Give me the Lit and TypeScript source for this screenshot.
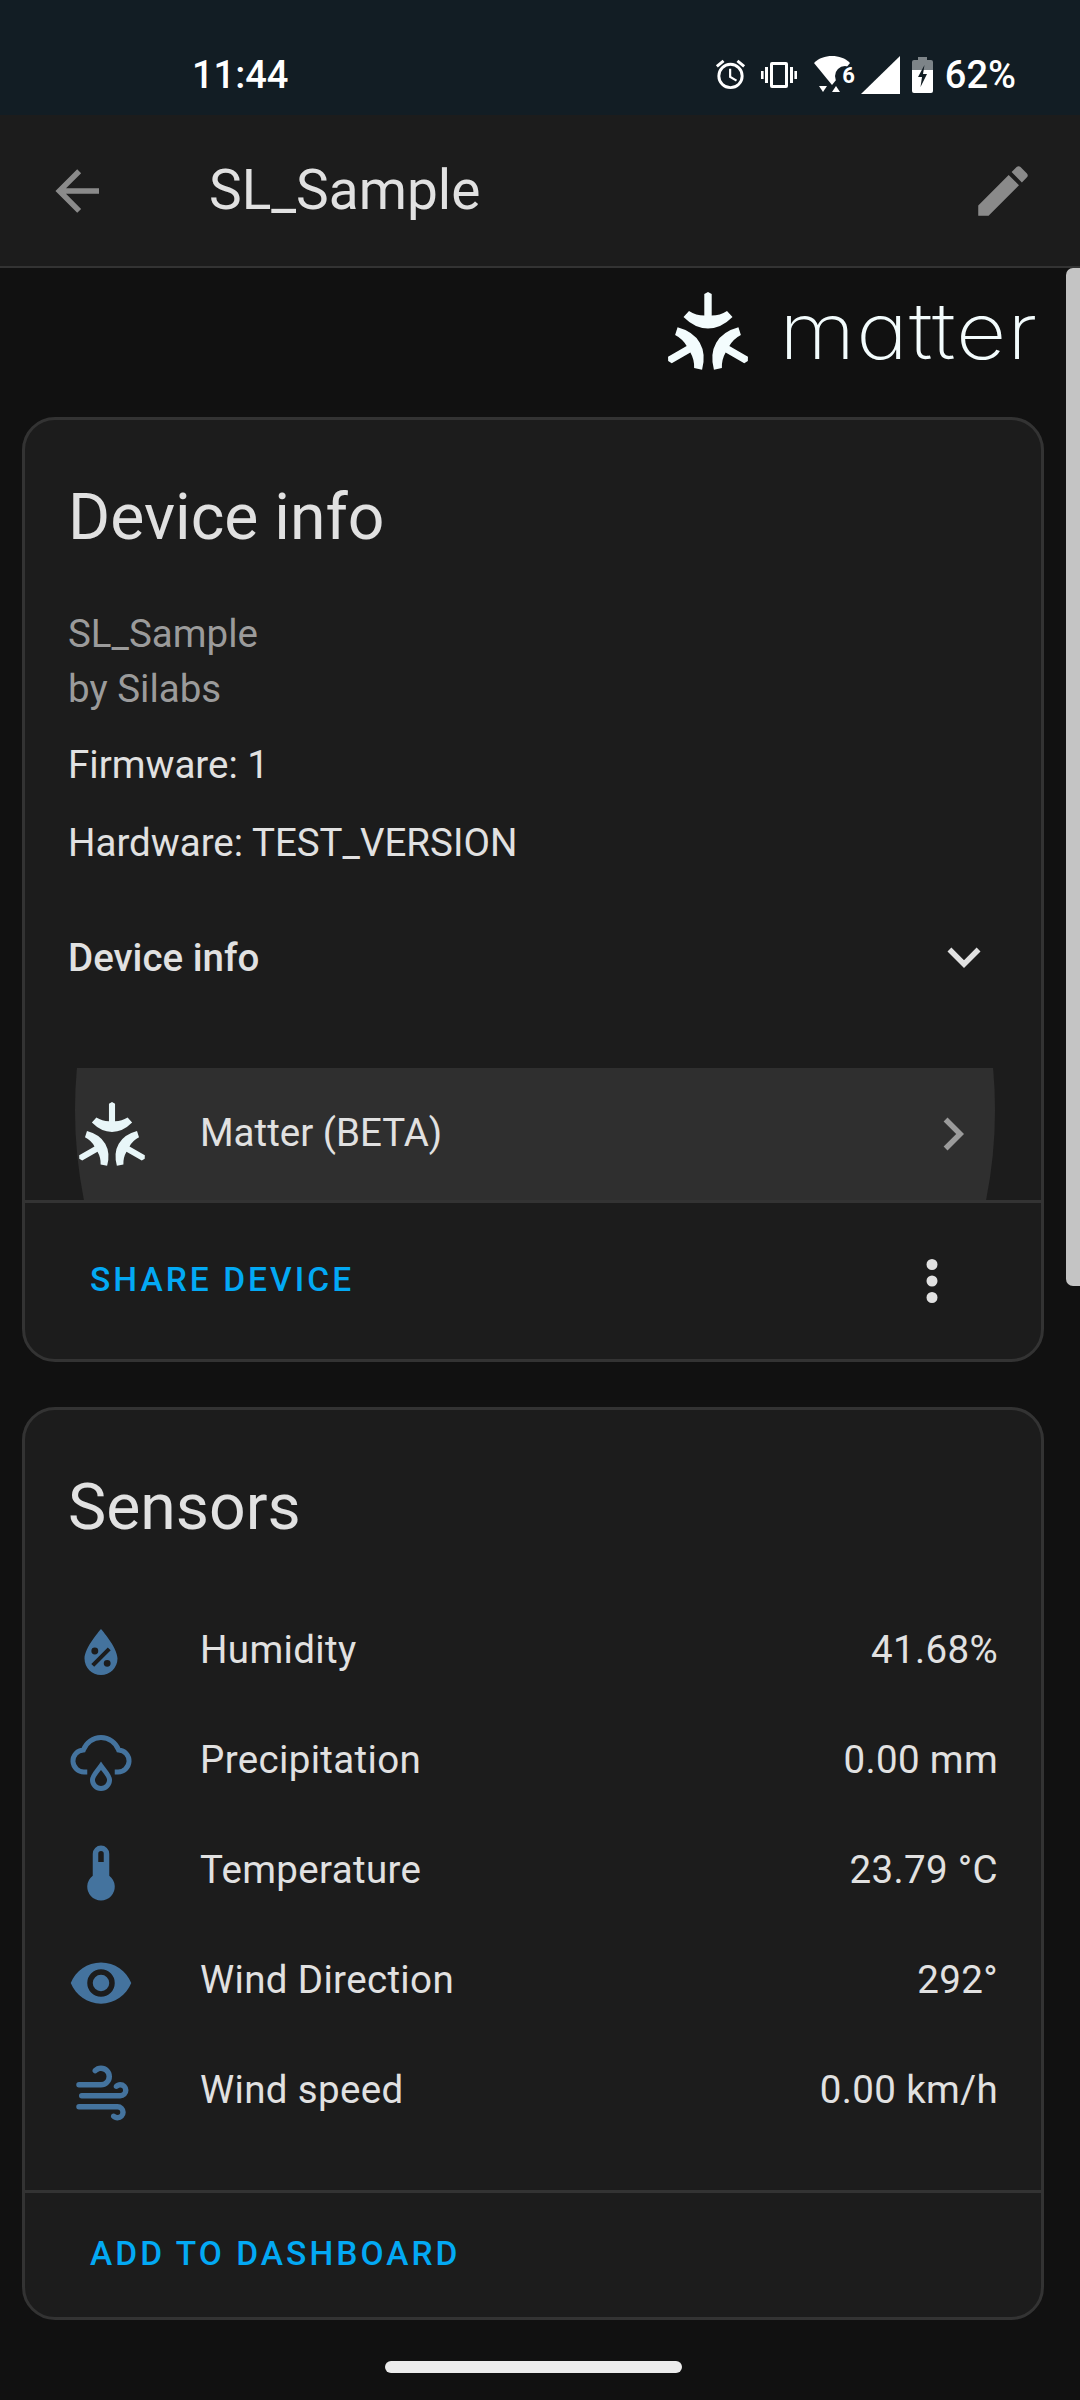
import { LitElement, html, css, svg } from 'lit';
import { customElement } from 'lit/decorators.js';

const mdi = (d: string, cls = '') =>
  html`<svg class="icon ${cls}" viewBox="0 0 24 24"><path d=${d}></path></svg>`;

const ICONS = {
  back: 'M20,11V13H8L13.5,18.5L12.08,19.92L4.16,12L12.08,4.08L13.5,5.5L8,11H20Z',
  pencil:
    'M20.71,7.04C21.1,6.65 21.1,6 20.71,5.63L18.37,3.29C18,2.9 17.35,2.9 16.96,3.29L15.12,5.12L18.87,8.87M3,17.25V21H6.75L17.81,9.93L14.06,6.18L3,17.25Z',
  down: 'M7.41,8.58L12,13.17L16.59,8.58L18,10L12,16L6,10L7.41,8.58Z',
  right: 'M8.59,16.58L13.17,12L8.59,7.41L10,6L16,12L10,18L8.59,16.58Z',
  dots: 'M12,16A2,2 0 0,1 14,18A2,2 0 0,1 12,20A2,2 0 0,1 10,18A2,2 0 0,1 12,16M12,10A2,2 0 0,1 14,12A2,2 0 0,1 12,14A2,2 0 0,1 10,12A2,2 0 0,1 12,10M12,4A2,2 0 0,1 14,6A2,2 0 0,1 12,8A2,2 0 0,1 10,6A2,2 0 0,1 12,4Z',
  humidity:
    'M12,3.25C12,3.25 6,10 6,14C6,17.32 8.69,20 12,20A6,6 0 0,0 18,14C18,10 12,3.25 12,3.25M14.47,9.97L15.53,11.03L9.53,17.03L8.47,15.97M9.75,10A1.25,1.25 0 0,1 11,11.25A1.25,1.25 0 0,1 9.75,12.5A1.25,1.25 0 0,1 8.5,11.25A1.25,1.25 0 0,1 9.75,10M14.25,14.5A1.25,1.25 0 0,1 15.5,15.75A1.25,1.25 0 0,1 14.25,17A1.25,1.25 0 0,1 13,15.75A1.25,1.25 0 0,1 14.25,14.5Z',
  thermometer:
    'M15 13V5A3 3 0 0 0 9 5V13A5 5 0 1 0 15 13M12 4A1 1 0 0 1 13 5V8H11V5A1 1 0 0 1 12 4Z',
  eye: 'M12,9A3,3 0 0,0 9,12A3,3 0 0,0 12,15A3,3 0 0,0 15,12A3,3 0 0,0 12,9M12,17A5,5 0 0,1 7,12A5,5 0 0,1 12,7A5,5 0 0,1 17,12A5,5 0 0,1 12,17M12,4.5C7,4.5 2.73,7.61 1,12C2.73,16.39 7,19.5 12,19.5C17,19.5 21.27,16.39 23,12C21.27,7.61 17,4.5 12,4.5Z',
  wind: 'M4,10A1,1 0 0,1 3,9A1,1 0 0,1 4,8H12A2,2 0 0,0 14,6A2,2 0 0,0 12,4C11.45,4 10.95,4.22 10.59,4.59C10.2,5 9.56,5 9.17,4.59C8.78,4.2 8.78,3.56 9.17,3.17C9.9,2.45 10.9,2 12,2A4,4 0 0,1 16,6A4,4 0 0,1 12,10H4M19,12A1,1 0 0,0 20,11A1,1 0 0,0 19,10C18.72,10 18.47,10.11 18.29,10.29C17.9,10.68 17.27,10.68 16.88,10.29C16.5,9.9 16.5,9.27 16.88,8.88C17.42,8.34 18.17,8 19,8A3,3 0 0,1 22,11A3,3 0 0,1 19,14H5A1,1 0 0,1 4,13A1,1 0 0,1 5,12H19M18,18H4A1,1 0 0,1 3,17A1,1 0 0,1 4,16H18A3,3 0 0,1 21,19A3,3 0 0,1 18,22C17.17,22 16.42,21.66 15.88,21.12C15.5,20.73 15.5,20.1 15.88,19.71C16.27,19.32 16.9,19.32 17.29,19.71C17.47,19.89 17.72,20 18,20A1,1 0 0,0 19,19A1,1 0 0,0 18,18Z',
  alarm:
    'M12,20A7,7 0 0,1 5,13A7,7 0 0,1 12,6A7,7 0 0,1 19,13A7,7 0 0,1 12,20M12,4A9,9 0 0,0 3,13A9,9 0 0,0 12,22A9,9 0 0,0 21,13A9,9 0 0,0 12,4M12.5,8H11V14L15.75,16.85L16.5,15.62L12.5,13.25V8M7.88,3.39L6.6,1.86L2,5.71L3.29,7.24L7.88,3.39M22,5.72L17.4,1.86L16.11,3.39L20.71,7.25L22,5.72Z',
};

const MATTER_ARM =
  'M50,4 L53.7,6 V27.5 Q62,27.5 69,23 L74.5,29 Q63,40.5 50,40.5 Q37,40.5 25.5,29 L31,23 Q38,27.5 46.3,27.5 V6 Z';

const matterMark = (cls: string) => html`<svg class=${cls} viewBox="10 4 80 84">
  ${[0, 120, 240].map(
    a => svg`<path d=${MATTER_ARM} transform="rotate(${a} 50 50)"></path>`,
  )}
</svg>`;

const precipitationIcon = html`<svg class="icon precip" viewBox="0 0 24 24">
  <path d="M7,16.7H6A4,4 0 0,1 5.6,8.7A6.8,6.8 0 0,1 18.4,8.7A4,4 0 0,1 18,16.7H17"></path>
  <path d="M12,14.5C10.6,16.5 8.9,18 8.9,19.6A3.1,3.1 0 0,0 15.1,19.6C15.1,18 13.4,16.5 12,14.5Z"></path>
</svg>`;

const SENSORS = [
  { icon: mdi(ICONS.humidity), name: 'Humidity', value: '41.68%' },
  { icon: precipitationIcon, name: 'Precipitation', value: '0.00 mm' },
  { icon: mdi(ICONS.thermometer), name: 'Temperature', value: '23.79 °C' },
  { icon: mdi(ICONS.eye), name: 'Wind Direction', value: '292°' },
  { icon: mdi(ICONS.wind), name: 'Wind speed', value: '0.00 km/h' },
];

@customElement('app-root')
export class AppRoot extends LitElement {
  static styles = css`
    :host {
      display: block;
      position: relative;
      width: 1080px;
      height: 2400px;
      overflow: hidden;
      background: #111111;
      color: #e1e1e1;
      font-family: Roboto, 'Liberation Sans', sans-serif;
    }

    .icon {
      display: block;
      width: 66px;
      height: 66px;
      flex: none;
      fill: currentColor;
    }

    /* status bar */
    .status {
      box-sizing: border-box;
      height: 115px;
      background: #121d24;
      color: #ffffff;
      display: flex;
      align-items: center;
      padding: 34px 64px 0 192px;
    }
    .time {
      font-size: 38px;
      font-weight: 500;
      flex: 1;
    }
    .status-icons {
      display: flex;
      align-items: center;
    }
    .alarm {
      width: 35px;
      height: 35px;
      margin-right: 13px;
    }
    .vibrate {
      width: 36px;
      height: 26px;
      margin-right: 17px;
      fill: #fff;
    }
    .wifi-wrap {
      position: relative;
      width: 40px;
      height: 38px;
      margin-right: 7px;
    }
    .wifi {
      width: 38px;
      height: 38px;
      display: block;
      fill: #fff;
    }
    .wifi-six {
      position: absolute;
      right: -1px;
      top: 9px;
      font-size: 22px;
      font-weight: 700;
      line-height: 22px;
      color: #fff;
    }
    .signal {
      width: 39px;
      height: 38px;
      margin-right: 12px;
      fill: #fff;
    }
    .battery {
      width: 21px;
      height: 36px;
      margin-right: 12px;
    }
    .pct {
      font-size: 38px;
      font-weight: 500;
    }

    /* app bar */
    .bar {
      box-sizing: border-box;
      height: 153px;
      background: #1c1c1c;
      border-bottom: 2px solid #333333;
      display: flex;
      align-items: center;
      padding: 0 44px;
    }
    .bar .icon {
      color: #8a8a8a;
    }
    .bar-title {
      flex: 1;
      margin: -2px 0 0 99px;
      font-size: 55px;
      color: #e1e1e1;
    }

    /* logo */
    .logo-row {
      box-sizing: border-box;
      height: 149px;
      display: flex;
      align-items: flex-start;
      justify-content: flex-end;
      padding: 24px 42px 0 0;
      gap: 33px;
      color: #f3fcfd;
    }
    .logo-mark {
      width: 80px;
      height: 84px;
      fill: #f3fcfd;
    }
    .logo-text {
      font-family: Inter, sans-serif;
      font-weight: 200;
      font-size: 78px;
      line-height: 84px;
      font-feature-settings: 'cv11' 1;
      letter-spacing: 1px;
      margin: -3px 0 0 26px;
      transform: scaleX(1.12);
      transform-origin: right center;
    }

    /* cards */
    .card {
      box-sizing: border-box;
      margin: 0 36px 0 22px;
      border: 3px solid #333333;
      border-radius: 33px;
      background: #1c1c1c;
      overflow: hidden;
    }
    .card + .card {
      margin-top: 45px;
    }
    .card-title {
      font-size: 64.3px;
      line-height: 72px;
      padding: 61px 43px 0;
      color: #e1e1e1;
    }
    .info {
      padding: 0 44px 0 43px;
      font-size: 38.5px;
    }
    .muted {
      color: #9b9b9b;
    }
    .line {
      display: block;
    }
    .info-a {
      padding-top: 53px;
      line-height: 55px;
    }
    .info-b,
    .info-c {
      margin-top: 21px;
      line-height: 56px;
    }
    .info-c {
      margin-top: 22px;
    }
    .collapse {
      margin-top: 56px;
      height: 60px;
      display: flex;
      align-items: center;
      justify-content: space-between;
      font-weight: 500;
    }

    .card-foot {
      border-top: 3px solid #333333;
      display: flex;
      align-items: center;
      justify-content: space-between;
      padding: 0 76px 0 65px;
      box-sizing: border-box;
    }
    .foot-device {
      height: 159px;
    }
    .foot-sensors {
      height: 127px;
    }
    .action {
      color: #03a9f4;
      font-size: 33.5px;
      font-weight: 500;
      letter-spacing: 3.05px;
      margin-top: -3px;
    }

    /* integration row */
    .link-row {
      position: relative;
      overflow: hidden;
      height: 132px;
      margin-top: 81px;
      padding-left: 54px;
      display: flex;
      align-items: center;
      font-size: 38.5px;
    }
    .ripple {
      position: absolute;
      left: 50px;
      top: -418px;
      width: 920px;
      height: 920px;
      border-radius: 50%;
      background: #2f2f2f;
    }
    .link-row > :not(.ripple) {
      position: relative;
    }
    .row-mark {
      width: 66px;
      height: 69px;
      flex: none;
      fill: #e8f6f8;
      margin-top: 5px;
    }
    .row-label {
      flex: 1;
      margin-left: 55px;
      margin-top: -4px;
    }
    .row-chevron {
      color: #9b9b9b;
      margin-right: 55px;
    }

    /* sensors */
    .sensors {
      padding: 0 43px 46px;
      margin-top: 51px;
    }
    .sensor {
      height: 110px;
      display: flex;
      align-items: center;
      font-size: 38.5px;
      letter-spacing: 0.35px;
    }
    .sensor .icon {
      color: #44739e;
      fill: #44739e;
      margin-top: 8px;
    }
    .sensor .precip {
      fill: none;
      stroke: #44739e;
      stroke-width: 1.8;
      margin-top: 0;
    }
    .sensor-name {
      flex: 1;
      margin-left: 66px;
    }

    /* overlays */
    .scrollbar {
      position: absolute;
      left: 1066px;
      top: 268px;
      width: 14px;
      height: 1018px;
      border-radius: 7px 0 0 7px;
      background: #c4c4c4;
    }
    .home {
      position: absolute;
      left: 385px;
      top: 2361px;
      width: 297px;
      height: 12px;
      border-radius: 6px;
      background: #ececec;
    }
  `;

  render() {
    return html`
      ${this.renderStatus()}
      <div class="bar">
        ${mdi(ICONS.back)}
        <div class="bar-title">SL_Sample</div>
        ${mdi(ICONS.pencil)}
      </div>
      <div class="logo-row">
        ${matterMark('logo-mark')}
        <div class="logo-text">matter</div>
      </div>
      ${this.renderDeviceCard()} ${this.renderSensorCard()}
      <div class="scrollbar"></div>
      <div class="home"></div>
    `;
  }

  private renderStatus() {
    return html`<div class="status">
      <div class="time">11:44</div>
      <div class="status-icons">
        ${mdi(ICONS.alarm, 'alarm')}
        <svg class="vibrate" viewBox="0 0 36 26">
          <path
            fill-rule="evenodd"
            d="M11,0H25A2,2 0 0,1 27,2V24A2,2 0 0,1 25,26H11A2,2 0 0,1 9,24V2A2,2 0 0,1 11,0ZM12,3V23H24V3Z"
          ></path>
          <rect x="4" y="5" width="3" height="16"></rect>
          <rect x="29" y="5" width="3" height="16"></rect>
          <rect x="0" y="9" width="2.6" height="8"></rect>
          <rect x="33.4" y="9" width="2.6" height="8"></rect>
        </svg>
        <div class="wifi-wrap">
          <svg class="wifi" viewBox="0 0 38 38">
            <path d="M0,7C5,2 11,0 18,0C25,0 31,2 36,7L18,29Z"></path>
            <circle cx="31" cy="20" r="10" fill="#121d24"></circle>
            <path d="M5,30H13L9,36Z"></path>
            <path d="M18,36H26L22,30Z"></path>
          </svg>
          <span class="wifi-six">6</span>
        </div>
        <svg class="signal" viewBox="0 0 39 38">
          <path d="M0,38L39,0V38Z"></path>
        </svg>
        <svg class="battery" viewBox="0 0 21 36">
          <path fill="#7d8488" d="M6,0H15V3H19A2,2 0 0,1 21,5V13H0V5A2,2 0 0,1 2,3H6Z"></path>
          <path fill="#ffffff" d="M0,13H21V34A2,2 0 0,1 19,36H2A2,2 0 0,1 0,34Z"></path>
          <path fill="#121d24" d="M12.5,8L6,20H10L8.5,30L15,17H11Z"></path>
        </svg>
        <span class="pct">62%</span>
      </div>
    </div>`;
  }

  private renderDeviceCard() {
    return html`<section class="card">
      <div class="card-title">Device info</div>
      <div class="info">
        <div class="info-a muted">
          <span class="line">SL_Sample</span>
          <span class="line">by Silabs</span>
        </div>
        <div class="info-b">Firmware: 1</div>
        <div class="info-c">Hardware: TEST_VERSION</div>
        <div class="collapse">
          <span>Device info</span>
          ${mdi(ICONS.down)}
        </div>
      </div>
      <div class="link-row">
        <div class="ripple"></div>
        ${matterMark('row-mark')}
        <div class="row-label">Matter (BETA)</div>
        ${mdi(ICONS.right, 'row-chevron')}
      </div>
      <div class="card-foot foot-device">
        <span class="action">SHARE DEVICE</span>
        ${mdi(ICONS.dots)}
      </div>
    </section>`;
  }

  private renderSensorCard() {
    return html`<section class="card">
      <div class="card-title">Sensors</div>
      <div class="sensors">
        ${SENSORS.map(
          s => html`<div class="sensor">
            ${s.icon}
            <span class="sensor-name">${s.name}</span>
            <span>${s.value}</span>
          </div>`,
        )}
      </div>
      <div class="card-foot foot-sensors">
        <span class="action">ADD TO DASHBOARD</span>
      </div>
    </section>`;
  }
}

declare global {
  interface HTMLElementTagNameMap {
    'app-root': AppRoot;
  }
}
